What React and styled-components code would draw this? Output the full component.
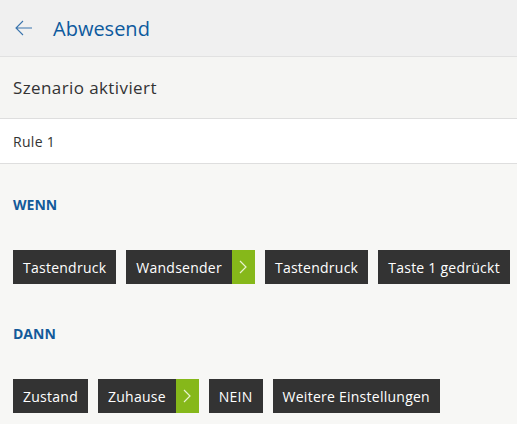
import React from 'react';
import styled, { createGlobalStyle } from 'styled-components';

const GlobalStyle = createGlobalStyle`
  html, body {
    margin: 0;
    padding: 0;
    background: #f7f7f5;
    font-family: "Open Sans", "Noto Sans", sans-serif;
  }
`;

const Header = styled.header`
  display: flex;
  align-items: center;
  height: 57px;
  background: #f0f0f0;
  border-bottom: 1px solid #e1e1e1;
  box-sizing: border-box;
  padding-left: 15px;
`;

const BackButton = styled.span`
  display: flex;
  width: 17px;
  height: 16px;
  margin-right: 21px;
  color: #3a74ad;
`;

const Title = styled.h1`
  margin: 0;
  font-size: 20px;
  font-weight: 400;
  color: #0d5a9e;
`;

const StatusRow = styled.div`
  display: flex;
  align-items: center;
  height: 62px;
  box-sizing: border-box;
  padding: 0 13px;
  background: #f5f5f3;
  border-bottom: 1px solid #dedede;
  font-size: 17px;
  letter-spacing: 0.4px;
  color: #333;
`;

const RuleRow = styled.div`
  display: flex;
  align-items: center;
  height: 45px;
  box-sizing: border-box;
  padding: 0 13px;
  background: #fff;
  border-bottom: 1px solid #dedede;
  font-size: 14px;
  letter-spacing: 0.3px;
  color: #333;
`;

const Section = styled.section`
  padding: 0 13px;
  margin-top: ${({ $top }) => $top}px;
`;

const Label = styled.h2`
  margin: 0 0 35px;
  font-size: 14px;
  line-height: 20px;
  font-weight: 700;
  color: #135a9a;
`;

const Chips = styled.div`
  display: flex;
  gap: 10px;
`;

const Chip = styled.div`
  display: flex;
  flex-shrink: 0;
  align-items: stretch;
  height: 34px;
  background: #333;
  color: #fff;
  font-size: 14px;
  letter-spacing: 0.25px;
  white-space: nowrap;
`;

const ChipText = styled.span`
  display: flex;
  align-items: center;
  padding: 0 10px;
`;

const ChipArrow = styled.span`
  display: flex;
  align-items: center;
  justify-content: center;
  width: 23px;
  background: #86b81a;
`;

const ArrowLeft = () => (
  <svg width="17" height="16" viewBox="0 0 17 16" fill="none" stroke="currentColor" strokeWidth="1.1">
    <path d="M1 8h16M8 1L1 8l7 7" />
  </svg>
);

const Chevron = () => (
  <svg width="8" height="14" viewBox="0 0 8 14" fill="none" stroke="#e8f3cf" strokeWidth="1.2">
    <path d="M1 1l6 6-6 6" />
  </svg>
);

const ChipItem = ({ label, next }) => (
  <Chip>
    <ChipText>{label}</ChipText>
    {next && (
      <ChipArrow>
        <Chevron />
      </ChipArrow>
    )}
  </Chip>
);

const wenn = [
  { label: 'Tastendruck' },
  { label: 'Wandsender', next: true },
  { label: 'Tastendruck' },
  { label: 'Taste 1 gedrückt' },
];

const dann = [
  { label: 'Zustand' },
  { label: 'Zuhause', next: true },
  { label: 'NEIN' },
  { label: 'Weitere Einstellungen' },
];

const App = () => (
  <>
    <GlobalStyle />
    <Header>
      <BackButton>
        <ArrowLeft />
      </BackButton>
      <Title>Abwesend</Title>
    </Header>
    <StatusRow>Szenario aktiviert</StatusRow>
    <RuleRow>Rule 1</RuleRow>
    <Section $top={31}>
      <Label>WENN</Label>
      <Chips>
        {wenn.map((c, i) => (
          <ChipItem key={i} {...c} />
        ))}
      </Chips>
    </Section>
    <Section $top={40}>
      <Label>DANN</Label>
      <Chips>
        {dann.map((c, i) => (
          <ChipItem key={i} {...c} />
        ))}
      </Chips>
    </Section>
  </>
);

export default App;
